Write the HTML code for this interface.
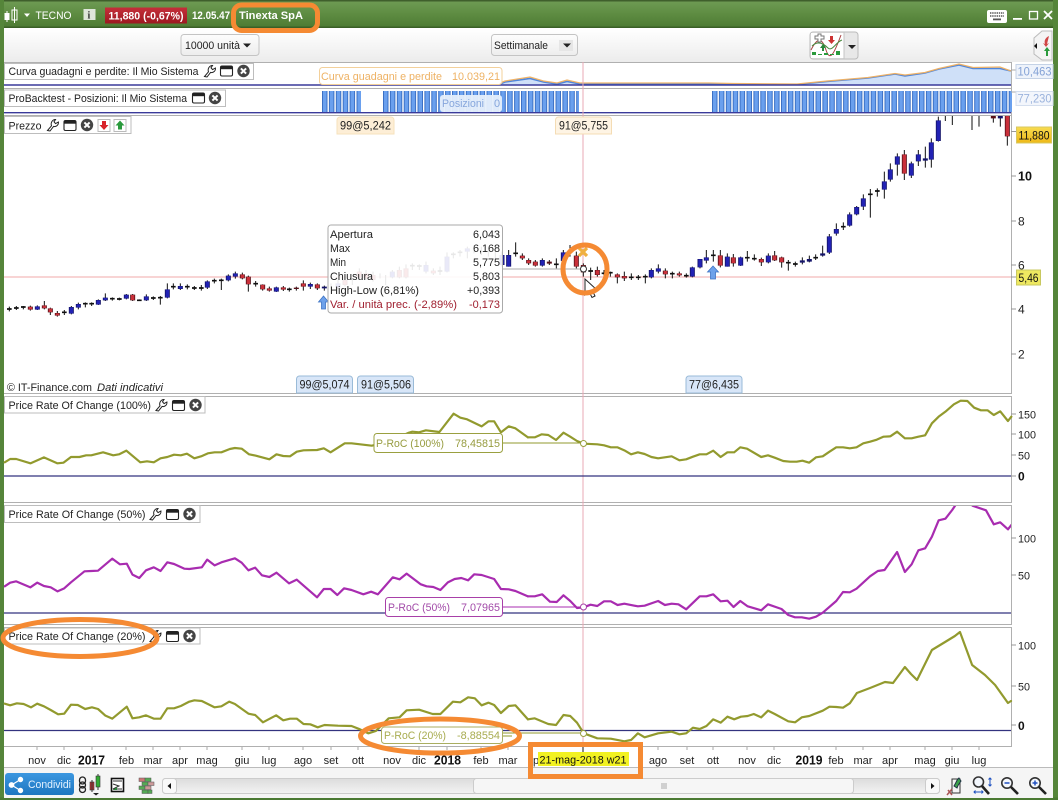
<!DOCTYPE html>
<html><head><meta charset="utf-8"><title>Tinexta SpA</title>
<style>
html,body{margin:0;padding:0;background:#fff;overflow:hidden}
svg{display:block}
text{font-family:"Liberation Sans",sans-serif;font-size:11px;fill:#222}
.c{fill:none;stroke-linejoin:round;stroke-linecap:round}
.ax{fill:#222;font-size:11px}
.b{font-weight:bold;font-size:13px;fill:#111}
.m{text-anchor:middle;fill:#222}
.e{fill:none;stroke:#f58a33;stroke-width:5}
</style></head><body>
<svg xmlns="http://www.w3.org/2000/svg" width="1058" height="800" viewBox="0 0 1058 800">
<defs>
<linearGradient id="tb" x1="0" y1="0" x2="0" y2="1"><stop offset="0" stop-color="#6f9c55"/><stop offset=".5" stop-color="#5e8c42"/><stop offset="1" stop-color="#4c7a32"/></linearGradient>
<linearGradient id="tl" x1="0" y1="0" x2="0" y2="1"><stop offset="0" stop-color="#fff"/><stop offset="1" stop-color="#ececec"/></linearGradient>
<linearGradient id="dd" x1="0" y1="0" x2="0" y2="1"><stop offset="0" stop-color="#fdfdfd"/><stop offset="1" stop-color="#ededed"/></linearGradient>
<linearGradient id="rd" x1="0" y1="0" x2="0" y2="1"><stop offset="0" stop-color="#c5303a"/><stop offset="1" stop-color="#9c1820"/></linearGradient>
<linearGradient id="sh" x1="0" y1="0" x2="0" y2="1"><stop offset="0" stop-color="#3b97e0"/><stop offset="1" stop-color="#1f76c0"/></linearGradient>
<linearGradient id="sb" x1="0" y1="0" x2="0" y2="1"><stop offset="0" stop-color="#dcdcdc"/><stop offset="1" stop-color="#f3f3f3"/></linearGradient>
<linearGradient id="yl" x1="0" y1="0" x2="0" y2="1"><stop offset="0" stop-color="#f8dc50"/><stop offset="1" stop-color="#eeb818"/></linearGradient>
<clipPath id="cp"><rect x="4" y="116" width="1007" height="277"/></clipPath>
<clipPath id="c50"><rect x="4" y="506" width="1007" height="118"/></clipPath>
<g id="wr"><path d="M-5.5 5.5 L-1.5 .8 C-2.6 -2 -.8 -5.5 2.5 -5.5 L1 -3.2 L2.6 -1.4 L5.4 -3 C5.8 -.2 3.4 2.2 .6 1.4 L-3 6 Z" fill="#fff" stroke="#222" stroke-width="1"/></g>
<g id="wn"><rect x="-6" y="-5" width="12" height="10" rx="1.5" fill="#fff" stroke="#222" stroke-width="1.1"/><rect x="-6" y="-5" width="12" height="3.2" fill="#222"/></g>
<g id="cl"><circle r="6.2" fill="#444"/><path d="M-2.6 -2.6L2.6 2.6M2.6 -2.6L-2.6 2.6" stroke="#fff" stroke-width="2"/></g>
<path id="pt" d="M0 0"/>
</defs>

<!-- frame -->
<rect width="1058" height="800" fill="#fff"/>
<rect x="0" y="0" width="1058" height="28" fill="url(#tb)"/>
<rect x="0" y="0" width="1058" height="1.5" fill="#3f5f2c"/>
<rect x="4" y="26.5" width="1049" height="1.5" fill="#3a5f26"/>
<rect x="0" y="0" width="4" height="800" fill="#55853a"/>
<rect x="1053" y="0" width="5" height="800" fill="#55853a"/>
<rect x="0" y="797.5" width="1058" height="2.5" fill="#4b7a33"/>
<rect x="4" y="29" width="1049" height="33" fill="url(#tl)"/>
<rect x="4" y="767" width="1049" height="31" fill="#f5f5f5"/>

<!-- title bar -->
<path d="M5 13h2v6h-2zM11 9h1.2v18h-1.2z" fill="#fff" opacity="0"/>
<g fill="#fff" stroke="none"><rect x="4.5" y="13" width="5" height="7"/><rect x="6.5" y="11" width="1" height="11"/></g>
<rect x="12" y="10" width="5" height="10" fill="none" stroke="#fff"/><rect x="14" y="7" width="1" height="16" fill="#fff"/>
<path d="M24 13.5h6l-3 3.5z" fill="#fff"/>
<text x="35.5" y="19" style="fill:#fff;font-size:11px" textLength="36" lengthAdjust="spacingAndGlyphs">TECNO</text>
<rect x="83.5" y="9" width="12" height="11" fill="#dfe6da"/><text x="87.5" y="18.5" style="fill:#333;font-size:10px;font-weight:bold;font-family:'Liberation Serif',serif">i</text>
<rect x="105" y="7.5" width="82" height="16" fill="url(#rd)"/>
<text x="108.5" y="19.5" style="fill:#fff;font-weight:bold;font-size:11px" textLength="75" lengthAdjust="spacingAndGlyphs">11,880 (-0,67%)</text>
<text x="192" y="19" style="fill:#fff;font-weight:bold;font-size:11px" textLength="38" lengthAdjust="spacingAndGlyphs">12.05.47</text>
<text x="239" y="19" style="fill:#fff;font-weight:bold;font-size:11px" textLength="64" lengthAdjust="spacingAndGlyphs">Tinexta SpA</text>
<rect x="987" y="10" width="20" height="13" rx="2" fill="#fff"/>
<path d="M990 13h14M990 16h14" stroke="#555" stroke-width="1.6" stroke-dasharray="1.4 .8"/><rect x="993" y="18.5" width="8" height="1.8" fill="#555"/>
<rect x="1013" y="18" width="9" height="1.8" fill="#fff"/>
<rect x="1029.5" y="11.5" width="8" height="7.5" fill="none" stroke="#fff" stroke-width="1.3"/>
<path d="M1044 11L1052 19M1052 11L1044 19" stroke="#fff" stroke-width="1.8"/>

<!-- toolbar -->
<rect x="181" y="34.5" width="78" height="21" rx="3" fill="url(#dd)" stroke="#c4c4c4"/>
<text x="185" y="49" textLength="55" lengthAdjust="spacingAndGlyphs">10000 unità</text>
<path d="M243 43.5h8l-4 4z" fill="#222"/>
<rect x="491.5" y="34.5" width="86" height="21" rx="3" fill="url(#dd)" stroke="#c4c4c4"/>
<text x="494" y="49" textLength="54" lengthAdjust="spacingAndGlyphs">Settimanale</text>
<rect x="559" y="40" width="14" height="11" fill="#e6e6e6"/><path d="M563 43.5h8l-4 4z" fill="#222"/>
<rect x="810" y="32" width="48" height="27" rx="3" fill="#e8e8e8" stroke="#bbb"/>
<rect x="811" y="33" width="33" height="25" fill="#fff"/>
<path d="M844 32v27" stroke="#c4c4c4"/>
<path d="M811 50C818 36 822 38 826 50S834 54 841 35" fill="none" stroke="#a44" stroke-width="1"/>
<path d="M812 46C818 40 824 44 828 48S836 42 842 40" fill="none" stroke="#4a8a40" stroke-width="1"/>
<path d="M815 36h3v-2h3v2h3v3h-3v3h-3v-3h-3z" fill="#fff" stroke="#777"/>
<path d="M830 36h3v4h2l-3.5 4-3.5-4h2z" fill="#c33"/>
<path d="M820 48l3-4 3 4h-2v3h-2v-3z" fill="#2a8a3c"/>
<path d="M812 55h4v-3h-4zM818 55h4v-1h-4zM824 55h4v-2h-4zM830 55h4v-1h-4zM836 55h4v-4h-4z" fill="#2a9a3c"/>
<path d="M848 45h8l-4 4z" fill="#222"/>
<path d="M1052 31h-10l-8 7v16l8 6h10z" fill="#f4f4f4" stroke="#bbb"/>
<path d="M1049 36c-4 2-5 5-4 8l-2-1 3 4 3-4-2 1" fill="#c33" opacity=".9"/>
<path d="M1047 47l-3 4h2v5h2v-5h2z" fill="#2a9a3c"/>
<path d="M1034 46l3-3v6z" fill="#111"/>

<!-- panel frames -->
<g fill="none" stroke="#b0b0b0">
<path d="M4 62.5H1011.5V88.5H4"/>
<path d="M4 88.5H1011.5V115.5H4"/>
<path d="M1011.5 115.5V393.5H4"/>
<path d="M4 396.5H1011.5V502.5H4"/>
<path d="M4 505.5H1011.5V624.5H4"/>
<path d="M4 627.5H1011.5V746.5H4"/>
<path d="M4 767.5H1053" stroke="#bbb"/>
</g>

<!-- panel 1 equity -->
<path d="M500 84.5L505 82 530 77.5 543.5 81.7 557 83.3 567 80.7 580 83.3 709 83.3 733 84 797 84.3 827 81 868 77.3 895 73.3 905 75.3 925 72.3 939 68.3 959 64.3 973 67.7 1000 67.7 1011 70.7V85H500Z" fill="#cfe0f8"/>
<path d="M500 84L505 82 530 78.5 543.5 82 557 84 567 81.5 580 84 709 84 733 84.5 797 84.5 827 81.5 868 78 895 74 905 76 925 73 939 69 959 65 973 68.5 1000 68.5 1011 71" fill="none" stroke="#4f86dc" stroke-width="1.6"/>
<path d="M500 83L505 81 530 77 543.5 81 557 83 567 80 580 83 709 83 733 83.5 797 84 827 81 868 77.5 895 73.5 905 75 925 72.5 939 68.5 959 64 973 67.5 1000 67 1011 71" fill="none" stroke="#f0b060" stroke-width="1.3" opacity=".95"/>
<path d="M4 85H1011" stroke="#3a3a9a" stroke-width="1.4"/>

<!-- panel 2 bars -->
<g fill="none" stroke-width="21">
<path d="M322 101.5H361M383 101.5H579M712 101.5H1012" stroke="#3b70c4" stroke-dasharray="5.5 1.4"/>
<path d="M323 101.5H361M384 101.5H579M713 101.5H1012" stroke="#6aa0ee" stroke-dasharray="3.5 3.4"/>
</g>
<path d="M4 112.7H1011" stroke="#3a3a9a" stroke-width="1.4"/>

<!-- right axis small labels -->
<path d="M1011 70h5M1011 92h5" stroke="#aaa"/>
<rect x="1016" y="64.5" width="37" height="14" fill="#eef3fb" stroke="#c4d2e6"/>
<text x="1017.5" y="75.5" style="fill:#84a2d6;font-size:12px" textLength="34" lengthAdjust="spacingAndGlyphs">10,463</text>
<rect x="1016" y="91.5" width="37" height="14" fill="#f3f6fc" stroke="#d4deee"/>
<text x="1017.5" y="102.5" style="fill:#9ab2dc;font-size:12px" textLength="34" lengthAdjust="spacingAndGlyphs">77,230</text>

<!-- crosshair -->
<path d="M583 62V746" stroke="#e8a8b4" stroke-width="1"/>
<path d="M4 277H1012" stroke="#f2a8a8" stroke-width="1"/>
<path d="M502 269H583" stroke="#aaa" stroke-width="1"/>

<!-- candles -->
<g clip-path="url(#cp)">
<g transform="translate(0,220) scale(.33333)" fill="none">
<path stroke="#111" stroke-width="3" d="M28 260V274M49 258V270M70 258V268M91 257V272M112 256V270M133 243V268M151 263V285M172 273V290M193 270V285M214 258V283M235 248V268M256 247V262M275 247V258M295 238V255M316 220V243M337 232V242M358 233V241M379 222V238M398 222V243M418 238V242M439 223V243M460 229V240M481 228V254M502 190V235M520 190V208M541 190V210M562 193V208M583 198V210M604 195V212M622 181V207M643 176V190M664 176V210M685 163V184M706 155V176M727 158V178M745 167V215M767 183V200M788 193V212M808 200V215M829 200V216M850 198V213M868 203V215M889 200V212M910 181V212M931 188V207M952 190V210M973 197V212"/>
<path stroke="#111" stroke-width="5" d="M21 267h14M42 264h14M63 261h14M186 277h14M249 251h14M268 251h14M330 236h14M351 237h14M411 241h14M453 234h14M474 233h14M513 200h14M555 200h14M576 204h14M597 204h14M636 182h14M657 181h14M760 191h14M861 208h14"/>
<path stroke="#14146a" stroke-width="15" d="M112 259V269M214 261V281M235 252V263M295 240V254M316 233V241M379 224V236M439 229V241M502 208V233M541 198V207M622 184V203M685 167V181M706 160V170M829 202V215M931 192V200M973 200V205"/>
<path stroke="#2222b4" stroke-width="10" d="M112 260V268M214 262V280M235 253V262M295 241V253M316 234V240M379 225V235M439 230V240M502 209V232M541 199V206M622 185V202M685 168V180M706 161V169M829 203V214M931 193V199"/>
<path stroke="#5a1018" stroke-width="15" d="M91 260V269M133 256V265M151 265V277M172 279V287M398 224V241M727 163V175M745 170V193M788 194V208M808 205V212M850 202V209M889 203V207M910 190V200M952 193V205"/>
<path stroke="#c9303a" stroke-width="10" d="M91 261V268M133 257V264M151 266V276M172 280V286M398 225V240M727 164V174M745 171V192M788 195V207M808 206V211M850 203V208M910 191V199M952 194V204"/>
</g>
<g transform="translate(320,215) scale(.33333)" fill="none">
<path stroke="#111" stroke-width="3" d="M33 205V220M54 195V222M75 185V215M97 190V210M118 160V195M138 165V195M159 170V200M180 175V190M197 180V210M217 165V190M238 155V190M258 148V190M277 145V165M298 148V165M318 140V175M340 160V180M360 155V180M381 112V172M400 112V130M420 105V125M442 95V130M462 90V115M484 95V120M505 95V125M526 100V130M546 110V155M566 105V155M587 82V125M607 115V135M626 130V150M646 135V155M667 130V155M688 135V150M709 130V160M730 105V140M750 90V125M769 110V160M790 145V185M812 158V195M832 155V185M852 165V190M871 170V185M892 175V205M913 170V198M934 175V195M955 180V195M976 178V205M994 160V190M1015 148V175M1036 160V190M1057 170V190M1078 170V185M1099 175V188M1117 155V187"/>
<path stroke="#111" stroke-width="5" d="M270 152h14M291 153h14M353 168h14M393 118h14M413 112h14M580 115h14M702 148h14M805 168h14M845 175h14M864 173h14M927 187h14M948 187h14M969 185h14M1050 176h14M1092 182h14"/>
<path stroke="#14146a" stroke-width="15" d="M54 205V218M217 170V187M318 150V170M381 125V170M442 100V110M546 120V150M566 120V155M667 135V152M730 112V138M994 165V187M1015 160V170M1117 157V185"/>
<path stroke="#2222b4" stroke-width="10" d="M54 206V217M217 171V186M318 151V169M381 126V169M442 101V109M546 121V149M566 121V154M667 136V151M730 113V137M994 166V186M1015 161V169M1117 158V184"/>
<path stroke="#5a1018" stroke-width="15" d="M75 195V210M118 170V188M138 175V190M159 180V195M238 165V187M258 160V187M340 167V175M607 122V130M626 135V145M646 140V152M688 140V146M769 122V155M790 150V172M832 165V180M892 178V187M913 183V190M1036 167V178M1078 175V181"/>
<path stroke="#c9303a" stroke-width="10" d="M75 196V209M118 171V187M138 176V189M159 181V194M238 166V186M258 161V186M340 168V174M607 123V129M626 136V144M646 141V151M769 123V154M790 151V171M832 166V179M892 179V186M913 184V189M1036 168V177M1078 176V180"/>
</g>
<g transform="translate(700,110) scale(.33333)" fill="none">
<path stroke="#111" stroke-width="3" d="M0 447V475M19 420V460M40 420V455M61 420V472M82 430V470M100 432V470M122 440V468M142 423V455M163 433V452M184 443V468M205 430V460M224 423V453M245 440V473M265 450V482M286 455V470M307 442V463M328 437V457M347 433V450M368 407V440M388 372V432M409 340V377M430 337V360M449 307V350M470 288V316M490 253V300M511 237V323M532 235V260M553 185V266M571 160V215M592 130V197M613 120V210M634 155V204M655 120V168M676 110V173M694 85V173M715 20V95M736 18V33M757 18V45M816 18V60M837 18V50M880 18V38M901 18V50M922 18V107"/>
<path stroke="#111" stroke-width="5" d="M33 436h14M135 443h14M156 446h14M258 458h14M279 462h14M340 443h14M423 350h14M504 253h14M525 243h14"/>
<path stroke="#14146a" stroke-width="15" d="M0 447V472M19 442V452M82 440V470M122 442V467M205 437V457M307 451V458M328 447V455M368 430V437M388 379V428M409 357V371M449 313V347M470 291V313M490 265V290M553 214V239M571 178V209M592 139V164M634 160V197M655 133V154M676 145V152M694 97V149M715 31V93M901 18V25"/>
<path stroke="#2222b4" stroke-width="10" d="M0 448V471M19 443V451M82 441V469M122 443V466M205 438V456M388 380V427M409 358V370M449 314V346M470 292V312M490 266V289M553 215V238M571 179V208M592 140V163M634 161V196M655 134V153M694 98V148M715 32V92"/>
<path stroke="#5a1018" stroke-width="15" d="M61 436V467M100 442V460M184 447V457M224 436V451M245 442V457M613 133V191M880 18V25M922 18V79"/>
<path stroke="#c9303a" stroke-width="10" d="M61 437V466M100 443V459M184 448V456M224 437V450M245 443V456M613 134V190M922 18V78"/>
</g>
</g>

<!-- price axis -->
<path d="M1011 131.5h5M1011 176h5M1011 221h5M1011 265h5M1011 277h5M1011 309h5M1011 354h5" stroke="#999"/>
<text x="1018" y="180.5" class="b" textLength="14" lengthAdjust="spacingAndGlyphs">10</text>
<text x="1018" y="225.5" class="ax" style="font-size:12px">8</text>
<text x="1018" y="269.5" class="ax" style="font-size:12px">6</text>
<text x="1018" y="313.5" class="ax" style="font-size:12px">4</text>
<text x="1018" y="358.5" class="ax" style="font-size:12px">2</text>
<rect x="1016.5" y="127" width="35" height="16" fill="url(#yl)" stroke="#d8c860"/>
<text x="1018.5" y="139.5" style="font-size:12px;fill:#111" textLength="31" lengthAdjust="spacingAndGlyphs">11,880</text>
<rect x="1016.5" y="270" width="24" height="15" fill="#eee860" stroke="#c8c860"/>
<text x="1018.5" y="282" style="font-size:12px;fill:#111" textLength="20" lengthAdjust="spacingAndGlyphs">5,46</text>

<!-- arrows -->
<path d="M323.5 296l-5 6h3v7h4v-7h3z" fill="#6da1ea" stroke="#3f74c4" stroke-width=".8"/>
<path d="M713 266l-5.5 6h3v7h5v-7h3z" fill="#6da1ea" stroke="#3f74c4" stroke-width=".8"/>

<!-- label boxes -->
<rect x="319.5" y="67.5" width="182.5" height="17" rx="3" fill="#fff" fill-opacity=".9" stroke="#f3d09a"/>
<text x="321" y="80" style="fill:#eeb264;font-size:11px" textLength="121" lengthAdjust="spacingAndGlyphs">Curva guadagni e perdite</text>
<text x="452" y="80" style="fill:#eeb264;font-size:11px" textLength="48" lengthAdjust="spacingAndGlyphs">10.039,21</text>
<rect x="440" y="95" width="62" height="17" rx="3" fill="#e6effb" fill-opacity=".95"/>
<text x="442" y="107" style="fill:#86a6dc;font-size:11px" textLength="42" lengthAdjust="spacingAndGlyphs">Posizioni</text>
<text x="494" y="107" style="fill:#86a6dc;font-size:11px">0</text>

<path d="M337 134V120a3 3 0 0 1 3-3h51a3 3 0 0 1 3 3v14z" fill="#fdeed6" stroke="#f6e2bc"/>
<text x="340" y="129.5" textLength="51" lengthAdjust="spacingAndGlyphs" style="font-size:12px">99@5,242</text>
<path d="M555.5 134V120a3 3 0 0 1 3-3h50a3 3 0 0 1 3 3v14z" fill="#fef4e4" stroke="#f4dcb4"/>
<text x="559" y="129.5" textLength="49" lengthAdjust="spacingAndGlyphs" style="font-size:12px">91@5,755</text>
<path d="M296.5 393V379a3 3 0 0 1 3-3h50a3 3 0 0 1 3 3v14z" fill="#d8e6f8" stroke="#9abbd8"/>
<text x="299.5" y="388.5" textLength="50" lengthAdjust="spacingAndGlyphs" style="font-size:12px">99@5,074</text>
<path d="M357.5 393V379a3 3 0 0 1 3-3h50a3 3 0 0 1 3 3v14z" fill="#d8e6f8" stroke="#9abbd8"/>
<text x="361" y="388.5" textLength="50" lengthAdjust="spacingAndGlyphs" style="font-size:12px">91@5,506</text>
<path d="M686 393V379a3 3 0 0 1 3-3h50a3 3 0 0 1 3 3v14z" fill="#d8e6f8" stroke="#9abbd8"/>
<text x="689" y="388.5" textLength="50" lengthAdjust="spacingAndGlyphs" style="font-size:12px">77@6,435</text>

<text x="7" y="391" textLength="85" lengthAdjust="spacingAndGlyphs">© IT-Finance.com</text>
<text x="97" y="391" textLength="66" lengthAdjust="spacingAndGlyphs" style="font-style:italic">Dati indicativi</text>

<!-- tooltip -->
<rect x="328" y="225" width="174.5" height="88" rx="3" fill="#fff" fill-opacity=".9" stroke="#aaa"/>
<g style="font-size:11px">
<text x="330" y="238" textLength="43" lengthAdjust="spacingAndGlyphs">Apertura</text>
<text x="330" y="252" textLength="20" lengthAdjust="spacingAndGlyphs">Max</text>
<text x="330" y="266" textLength="16" lengthAdjust="spacingAndGlyphs">Min</text>
<text x="330" y="280" textLength="43" lengthAdjust="spacingAndGlyphs">Chiusura</text>
<text x="330" y="294" textLength="89" lengthAdjust="spacingAndGlyphs">High-Low (6,81%)</text>
<text x="330" y="308" textLength="127" lengthAdjust="spacingAndGlyphs" style="fill:#a02030">Var. / unità prec. (-2,89%)</text>
<text x="473" y="238" textLength="27" lengthAdjust="spacingAndGlyphs">6,043</text>
<text x="473" y="252" textLength="27" lengthAdjust="spacingAndGlyphs">6,168</text>
<text x="473" y="266" textLength="27" lengthAdjust="spacingAndGlyphs">5,775</text>
<text x="473" y="280" textLength="27" lengthAdjust="spacingAndGlyphs">5,803</text>
<text x="467" y="294" textLength="33" lengthAdjust="spacingAndGlyphs">+0,393</text>
<text x="469" y="308" textLength="31" lengthAdjust="spacingAndGlyphs" style="fill:#a02030">-0,173</text>
</g>

<!-- marker -->
<path d="M579 248l8 8M587 248l-8 8" stroke="#f0b040" stroke-width="3.2"/>
<circle cx="583.5" cy="269" r="3" fill="#fff" stroke="#333"/>
<path d="M585 279L585 295 589 291.5 592 297.5 595 296 592 290 597 290Z" fill="#fff" stroke="#222" stroke-width="1"/>

<!-- zero lines -->
<path d="M4 476H1011M4 613H1011M4 730.5H1011" stroke="#33337f" stroke-width="1.2"/>

<!-- ROC 100 -->
<g transform="translate(0,395) scale(.338,.33333)">
<polyline class="c" stroke="#929a2e" stroke-width="2.2" vector-effect="non-scaling-stroke" points="14,202 30,192 48,192 90,205 130,187 170,205 188,203 210,186 235,186 255,181 270,181 305,172 335,181 352,178 374,167 415,202 435,199 455,202 475,190 495,186 515,179 535,181 553,176 575,190 595,184 615,175 635,172 655,172 680,162 695,159 715,161 737,178 757,182 797,193 818,178 838,183 858,184 878,170 898,166 938,165 958,160 978,172 1020,145 1040,145 1100,152 1150,140 1210,113 1220,110 1240,112 1260,106 1300,111 1342,56 1362,68 1382,73 1425,94 1445,79 1462,79 1482,112 1505,94 1525,100 1562,127"/>
</g>
<g transform="translate(528,395) scale(.338,.33333)">
<polyline class="c" stroke="#929a2e" stroke-width="2.2" vector-effect="non-scaling-stroke" points="0,127 20,127 40,118 60,120 83,135 105,113 125,125 145,138 165,146 205,148 225,151 245,157 265,157 285,166 305,178 325,172 345,177 365,186 385,190 425,184 448,196 468,193 488,185 508,178 528,178 548,167 570,186 590,172 610,172 628,157 648,161 690,186 710,181 730,188 755,198 775,200 795,200 812,197 832,203 852,187 872,184 892,170 912,157 932,157 952,160 972,157 992,145 1012,140 1032,134 1052,125 1072,124 1092,110 1115,130 1135,130 1155,125 1175,121 1195,85 1215,65 1235,50 1260,28 1280,17 1300,18 1320,38 1340,46 1360,46 1378,60 1397,49 1420,78 1430,65"/>
</g>

<!-- ROC 50 -->
<g clip-path="url(#c50)">
<g transform="translate(0,505) scale(.338,.33333)">
<polyline class="c" stroke="#a82cb0" stroke-width="2.2" vector-effect="non-scaling-stroke" points="14,244 30,233 48,229 90,247 110,233 130,243 150,247 170,259 190,250 210,232 250,199 270,198 290,197 332,161 355,178 375,176 392,209 412,219 432,196 455,187 475,198 495,172 515,177 545,191 560,192 597,187 613,164 635,181 655,172 695,160 715,173 735,196 755,188 775,211 797,216 818,203 855,235 878,224 938,277 958,252 978,252 998,270 1018,250 1040,255 1075,268 1098,260 1118,268 1162,217 1182,223 1203,206 1245,238 1262,244 1282,246 1303,255 1325,232 1345,222 1365,219 1385,226 1403,208 1425,210 1462,222 1482,252 1505,253 1525,258 1562,274"/>
</g>
<g transform="translate(528,505) scale(.338,.33333)">
<polyline class="c" stroke="#a82cb0" stroke-width="2.2" vector-effect="non-scaling-stroke" points="0,274 20,274 42,268 65,290 85,291 105,271 125,288 145,309 165,307 185,299 205,303 225,289 245,289 265,300 285,296 325,304 345,302 385,288 405,300 425,296 445,298 468,313 508,274 528,274 548,268 570,289 590,287 608,306 628,288 650,304 690,316 710,298 750,312 770,330 790,337 810,337 832,341 852,335 872,323 912,288 932,261 952,262 972,251 1012,214 1035,198 1055,195 1092,141 1115,201 1135,178 1155,136 1175,130 1195,95 1215,46 1235,41 1255,15 1265,0 1275,-12 1300,-15 1315,2 1355,16 1378,58 1397,52 1420,73 1430,60"/>
</g>
</g>

<!-- ROC 20 -->
<g transform="translate(0,625) scale(.338,.33333)">
<polyline class="c" stroke="#929a2e" stroke-width="2.2" vector-effect="non-scaling-stroke" points="14,236 30,241 50,235 70,237 92,247 110,236 130,244 150,255 172,268 190,266 210,239 230,240 252,252 272,247 290,252 312,272 332,281 375,245 392,280 412,277 432,271 455,281 475,281 495,250 515,250 535,243 560,230 575,226 597,228 635,247 655,244 678,230 695,237 735,266 755,270 778,292 817,271 838,286 858,281 878,281 898,297 918,298 940,307 960,300 1000,302 1040,303 1065,313 1090,325 1112,318 1150,280 1182,277 1203,256 1240,254 1280,267 1303,267 1340,230 1362,232 1385,217 1405,220 1425,241 1445,233 1462,240 1482,264 1505,243 1525,241 1562,283"/>
</g>
<g transform="translate(528,700) scale(.338,.33333)">
<polyline class="c" stroke="#929a2e" stroke-width="2.2" vector-effect="non-scaling-stroke" points="0,58 20,55 60,72 83,75 105,45 125,48 145,68 165,100 205,115 245,116 285,124 305,120 325,100 345,112 385,100 425,95 448,103 468,100 488,83 508,87 528,78 548,58 570,68 590,50 610,58 630,50 650,48 668,42 690,52 710,32 730,42 770,64 790,67 810,52 832,48 872,32 892,20 912,21 932,23 952,10 973,-21 1012,-36 1056,-54 1080,-51 1115,-99 1133,-78 1151,-60 1195,-150 1234,-174 1263,-192 1278,-204 1314,-105 1352,-75 1382,-45 1420,9 1429,3"/>
</g>

<!-- indicator labels -->
<path d="M502 443H583" stroke="#929a2e"/>
<rect x="374" y="433.5" width="128.5" height="19" rx="3" fill="#fff" stroke="#9aa040"/>
<text x="376" y="447" style="fill:#979c40;font-size:11px" textLength="68" lengthAdjust="spacingAndGlyphs">P-RoC (100%)</text>
<text x="455" y="447" style="fill:#979c40;font-size:11px" textLength="45" lengthAdjust="spacingAndGlyphs">78,45815</text>
<circle cx="583.5" cy="443.5" r="3" fill="#fff" stroke="#9aa040"/>
<path d="M502 607H583" stroke="#a82cb0"/>
<rect x="385.5" y="597.5" width="117" height="19" rx="3" fill="#fff" stroke="#a840a8"/>
<text x="388" y="611" style="fill:#a24aa8;font-size:11px" textLength="62" lengthAdjust="spacingAndGlyphs">P-RoC (50%)</text>
<text x="461" y="611" style="fill:#a24aa8;font-size:11px" textLength="39" lengthAdjust="spacingAndGlyphs">7,07965</text>
<circle cx="583.5" cy="607" r="3" fill="#fff" stroke="#a840a8"/>
<path d="M502 733H583M502 736H512" stroke="#929a2e"/>
<rect x="381.5" y="727" width="121" height="16.5" rx="3" fill="#fff" stroke="#aaae60"/>
<text x="384" y="739" style="fill:#a8ac50;font-size:11px" textLength="62" lengthAdjust="spacingAndGlyphs">P-RoC (20%)</text>
<text x="457" y="739" style="fill:#a8ac50;font-size:11px" textLength="43" lengthAdjust="spacingAndGlyphs">-8,88554</text>
<circle cx="583.5" cy="733.5" r="3" fill="#fff" stroke="#9aa040"/>

<!-- indicator axes -->
<path d="M1011 414h5M1011 434h5M1011 455h5M1011 476h5M1011 538h5M1011 575h5M1011 645h5M1011 686h5M1011 725h5" stroke="#999"/>
<text x="1018" y="418.5" textLength="18" lengthAdjust="spacingAndGlyphs" class="ax">150</text>
<text x="1018" y="438.5" textLength="18" lengthAdjust="spacingAndGlyphs" class="ax">100</text>
<text x="1018" y="459.5" textLength="12" lengthAdjust="spacingAndGlyphs" class="ax">50</text>
<text x="1018" y="480.5" class="b" style="font-size:12px">0</text>
<text x="1018" y="542.5" textLength="18" lengthAdjust="spacingAndGlyphs" class="ax">100</text>
<text x="1018" y="579.5" textLength="12" lengthAdjust="spacingAndGlyphs" class="ax">50</text>
<text x="1018" y="649.5" textLength="18" lengthAdjust="spacingAndGlyphs" class="ax">100</text>
<text x="1018" y="690.5" textLength="12" lengthAdjust="spacingAndGlyphs" class="ax">50</text>
<text x="1018" y="730" class="b" style="font-size:12px">0</text>

<!-- panel headers -->
<g fill="#fff" stroke="#bdbdbd">
<rect x="4.5" y="63.5" width="249" height="16"/>
<rect x="4.5" y="90" width="221" height="16.5"/>
<rect x="4.5" y="116.5" width="126.5" height="17"/>
<rect x="4.5" y="396.5" width="200.5" height="16.5"/>
<rect x="4.5" y="505.5" width="195.5" height="17"/>
<rect x="4.5" y="628" width="195.5" height="16"/>
</g>
<text x="8.5" y="75" textLength="190" lengthAdjust="spacingAndGlyphs">Curva guadagni e perdite: Il Mio Sistema</text>
<use href="#wr" x="210" y="71"/><use href="#wn" x="226.5" y="71"/><use href="#cl" x="243.5" y="71"/>
<text x="8.5" y="102" textLength="178.5" lengthAdjust="spacingAndGlyphs">ProBacktest - Posizioni: Il Mio Sistema</text>
<use href="#wn" x="198.5" y="98"/><use href="#cl" x="215" y="98"/>
<text x="8.5" y="129.5" textLength="33" lengthAdjust="spacingAndGlyphs">Prezzo</text>
<use href="#wr" x="53" y="125"/><use href="#wn" x="70" y="125.5"/><use href="#cl" x="87" y="125"/>
<rect x="98" y="119.5" width="12" height="12" fill="#fff" stroke="#bbb"/><path d="M102 121h4v4h2.5l-4.5 5-4.5-5h2.5z" fill="#d8222a"/>
<rect x="114" y="119.5" width="12" height="12" fill="#fff" stroke="#bbb"/><path d="M120 120.5l4.5 5h-2.5v4h-4v-4h-2.5z" fill="#2a9a3c"/>
<text x="8.5" y="409" textLength="142.5" lengthAdjust="spacingAndGlyphs">Price Rate Of Change (100%)</text>
<use href="#wr" x="161.5" y="405"/><use href="#wn" x="178.5" y="405.5"/><use href="#cl" x="195.5" y="405"/>
<text x="8.5" y="518" textLength="137" lengthAdjust="spacingAndGlyphs">Price Rate Of Change (50%)</text>
<use href="#wr" x="155.5" y="514"/><use href="#wn" x="172.5" y="514.5"/><use href="#cl" x="189.5" y="514"/>
<text x="8.5" y="640" textLength="137" lengthAdjust="spacingAndGlyphs">Price Rate Of Change (20%)</text>
<use href="#wr" x="155.5" y="636"/><use href="#wn" x="172.5" y="636.5"/><use href="#cl" x="189.5" y="636"/>

<!-- x axis -->
<path stroke="#aaa" d="M37 747v3M64 747v3M92 747v3M126 747v3M153 747v3M180 747v3M207 747v3M242 747v3M269 747v3M303 747v3M331 747v3M358 747v3M392 747v3M419 747v3M447 747v3M481 747v3M508 747v3M658 747v3M687 747v3M713 747v3M747 747v3M774 747v3M809 747v3M836 747v3M863 747v3M890 747v3M925 747v3M952 747v3M979 747v3"/>
<path d="M583 746v6" stroke="#111"/>
<g style="font-size:11px">
<text class="m" x="37" y="764">nov</text><text class="m" x="64" y="764">dic</text>
<text x="78" y="764.5" class="b" textLength="27" lengthAdjust="spacingAndGlyphs">2017</text>
<text class="m" x="126.5" y="764">feb</text><text class="m" x="153" y="764">mar</text><text class="m" x="180" y="764">apr</text>
<text class="m" x="207" y="764">mag</text><text class="m" x="242" y="764">giu</text><text class="m" x="269" y="764">lug</text>
<text class="m" x="303" y="764">ago</text><text class="m" x="331" y="764">set</text><text class="m" x="358" y="764">ott</text>
<text class="m" x="392" y="764">nov</text><text class="m" x="419" y="764">dic</text>
<text x="434" y="764.5" class="b" textLength="27" lengthAdjust="spacingAndGlyphs">2018</text>
<text class="m" x="481" y="764">feb</text><text class="m" x="508" y="764">mar</text><text x="533" y="764">p</text>
<text class="m" x="658" y="764">ago</text><text class="m" x="687" y="764">set</text><text class="m" x="713" y="764">ott</text>
<text class="m" x="747" y="764">nov</text><text class="m" x="774" y="764">dic</text>
<text x="795.5" y="764.5" class="b" textLength="27" lengthAdjust="spacingAndGlyphs">2019</text>
<text class="m" x="836" y="764">feb</text><text class="m" x="863" y="764">mar</text><text class="m" x="890" y="764">apr</text>
<text class="m" x="925" y="764">mag</text><text class="m" x="952" y="764">giu</text><text class="m" x="979" y="764">lug</text>
</g>
<rect x="538" y="752" width="91" height="14" fill="#f2f222"/>
<text x="539.5" y="763.5" style="fill:#111;font-size:11px" textLength="87" lengthAdjust="spacingAndGlyphs">21-mag-2018 w21</text>

<!-- footer -->
<rect x="5" y="773" width="69" height="22" rx="3" fill="url(#sh)"/>
<g fill="#fff" stroke="#fff"><circle cx="11.5" cy="785" r="2.4"/><circle cx="20.5" cy="779.5" r="2.2"/><circle cx="20.5" cy="790.5" r="2.2"/><path d="M11.5 785L20.5 779.5M11.5 785L20.5 790.5" stroke-width="1.2"/></g>
<text x="28" y="788" style="fill:#e4f2ff;font-size:11px" textLength="43" lengthAdjust="spacingAndGlyphs">Condividi</text>
<g fill="none" stroke="#222" stroke-width="1.3"><rect x="79.5" y="777" width="6" height="7" rx="3"/><rect x="79.5" y="782" width="6" height="6" rx="3"/><rect x="79.5" y="786.5" width="6" height="6" rx="3"/></g>
<rect x="90" y="782" width="4" height="8" fill="#b33" stroke="#333" stroke-width=".6"/><path d="M92 780v12M98 774v16" stroke="#333"/><rect x="96" y="776" width="4" height="11" fill="#3a3" stroke="#333" stroke-width=".6"/>
<path d="M93 793h6l-3 2.5z" fill="#222"/>
<rect x="111.5" y="778.5" width="12" height="13" fill="#fff" stroke="#111" stroke-width="1.6"/><path d="M113 781h9M113 784l6 2-6 3h9" fill="none" stroke="#333"/><path d="M113 790l4-3v3z" fill="#2a8a3c"/>
<g stroke="#555" stroke-width=".5"><rect x="139" y="778" width="6" height="3.5" fill="#c77"/><rect x="145" y="778" width="6" height="3.5" fill="#5a5"/><rect x="142" y="782" width="6" height="3.5" fill="#5a5"/><rect x="148" y="782" width="6" height="3.5" fill="#c99"/><rect x="139" y="786" width="6" height="3.5" fill="#5a5"/><rect x="145" y="786" width="6" height="3.5" fill="#c99"/><rect x="142" y="790" width="6" height="3.5" fill="#5a5"/><rect x="148" y="790" width="4" height="3.5" fill="#5a5"/></g>

<rect x="162.5" y="778.5" width="777" height="15" rx="3" fill="url(#sb)" stroke="#ccc"/>
<rect x="473.5" y="778.5" width="380" height="15" rx="3" fill="#f6f6f6" stroke="#ccc"/>
<path d="M661 784h6M661 786h6M661 788h6" stroke="#aaa"/>
<rect x="162.5" y="778.5" width="14" height="15" rx="3" fill="#f9f9f9" stroke="#ccc"/><path d="M171 783v6l-3.5-3z" fill="#111"/>
<rect x="925.5" y="778.5" width="14" height="15" rx="3" fill="#f9f9f9" stroke="#ccc"/><path d="M931 783v6l3.5-3z" fill="#111"/>

<rect x="952" y="779" width="8" height="14" fill="#f4f4f4" stroke="#333"/><path d="M948 790l4 5M947 795l5-6" stroke="#a55" stroke-width="1.5"/><path d="M954 786c3-5 3-7 5-8l2 3c-1 2-3 3-4 7z" fill="#3aa04a" stroke="#234"/>
<g fill="none"><circle cx="978.5" cy="782" r="5" stroke="#333" stroke-width="1.6" fill="#f2f6fc"/><path d="M982 786l7 8" stroke="#222" stroke-width="2.6"/><path d="M974 792h9M975.5 790.5l-1.5 1.5 1.5 1.5M981.5 790.5l1.5 1.5-1.5 1.5" stroke="#1c4fc0" stroke-width="1"/><path d="M990 778v8M988.5 779.5l1.5-1.5 1.5 1.5M988.5 784.5l1.5 1.5 1.5-1.5" stroke="#1c4fc0" stroke-width="1"/></g>
<g fill="none"><circle cx="1007" cy="783" r="5.2" stroke="#333" stroke-width="1.6" fill="#f6f8fc"/><path d="M1004.5 783h5" stroke="#2050c0" stroke-width="1.5"/><path d="M1011 787l7 7" stroke="#222" stroke-width="2.6"/></g>
<g fill="none"><circle cx="1035" cy="783" r="5.2" stroke="#333" stroke-width="1.6" fill="#f6f8fc"/><path d="M1032.5 783h5M1035 780.5v5" stroke="#2050c0" stroke-width="1.5"/><path d="M1039 787l7 7" stroke="#222" stroke-width="2.6"/></g>

<!-- orange annotations -->
<rect x="233.5" y="5" width="84" height="25.5" rx="8" class="e"/>
<ellipse cx="585" cy="269" rx="22" ry="24" class="e"/>
<ellipse cx="80" cy="638" rx="77" ry="18.5" class="e"/>
<ellipse cx="440" cy="736" rx="79.5" ry="17" class="e"/>
<rect x="530.5" y="744.5" width="110" height="32" class="e"/>
</svg>
</body></html>
